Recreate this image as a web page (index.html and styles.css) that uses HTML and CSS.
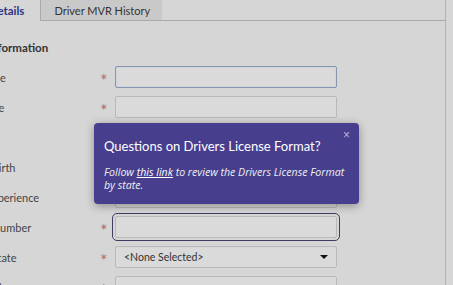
FILE: index.html
```html
<!DOCTYPE html>
<html lang="en">
<head>
    <meta charset="UTF-8">
    <title>Driver Details</title>
    <link rel="stylesheet" href="styles.css">
</head>
<body>
    <div class="page">
        <div class="tabs">
            <div class="tab active">Driver Details</div>
            <div class="tab">Driver MVR History</div>
            <div class="tab-fill"></div>
        </div>
        <div class="panel">
            <h3 class="section-title">Driver Information</h3>
            <div class="form">
                <label class="lbl">First Name</label><span class="req">*</span><input class="field field-blue" type="text">
                <label class="lbl">Last Name</label><span class="req">*</span><input class="field" type="text">
                <label class="lbl"></label><span class="req"></span><input class="field" type="text">
                <label class="lbl">Date of Birth</label><span class="req"></span><input class="field" type="text">
                <label class="lbl">Driver Experience</label><span class="req"></span><input class="field" type="text">
                <label class="lbl">License Number</label><span class="req">*</span><input class="field field-focus" type="text">
                <label class="lbl">License State</label><span class="req">*</span>
                <div class="field select"><span>&lt;None Selected&gt;</span><span class="caret"></span></div>
                <label class="lbl">License Class</label><span class="req">*</span><input class="field" type="text">
            </div>
        </div>
    </div>

    <div class="popover">
        <button class="popover-close">&times;</button>
        <h4>Questions on Drivers License Format?</h4>
        <p>Follow <a href="#">this link</a> to review the Drivers License Format by state.</p>
    </div>
</body>
</html>
```

FILE: styles.css
```css
body { margin: 0; background: #d6d6d6; font-family: 'Lato', 'Open Sans', sans-serif; color: #3a3a3a; overflow: hidden; height: 285px; }
.page { margin-left: -47px; width: 496px; }

/* Tabs */
.tabs { display: flex; height: 21px; }
.tab { font-size: 11px; line-height: 15px; padding: 3px 13px 3px 13px; box-sizing: border-box; height: 21px; white-space: nowrap; }
.tab.active { color: #2c3585; font-weight: bold; font-size: 11.5px; padding-left: 1px; padding-right: 16px; border-right: 1px solid #a9a9a9; }
.tab:not(.active) { background: #c9c9c9; color: #333; border-bottom: 1px solid #a9a9a9; width: 121px; }
.tab-fill { flex: 1; border-bottom: 1px solid #a9a9a9; border-right: 1px solid #b3b3b3; margin-right: 3px; }

/* Panel */
.panel { border-right: 1px solid #b3b3b3; margin-right: 3px; height: 264px; overflow: hidden; }
.section-title { margin: 0; padding-top: 20px; font-size: 11.5px; line-height: 14px; font-weight: bold; color: #333; }
.form { display: grid; grid-template-columns: 147px 15px 222px; grid-auto-rows: 22px; row-gap: 8px; margin-top: 11px; align-items: center; }
.lbl { font-size: 11px; color: #444; white-space: nowrap; overflow: hidden; }
.req { color: #b96a5c; font-size: 18px; line-height: 14px; text-align: left; margin-top: 5px; }
.field { height: 22px; box-sizing: border-box; border: 1px solid #b9b9b9; border-radius: 2px; background: #dadada; font-family: inherit; font-size: 11px; margin: 0; }
.field-blue { border-color: #8796ad; box-shadow: inset 0 0 0 1px #cfd6df; }
.field-focus { outline: 1px solid #3d3d62; outline-offset: 2px; }
.select { display: flex; align-items: center; justify-content: space-between; padding: 0 8px 0 8px; color: #333; font-size: 10.5px; }
.caret { width: 0; height: 0; border-left: 4px solid transparent; border-right: 4px solid transparent; border-top: 4px solid #111; }

/* Popover */
.popover { position: absolute; left: 94px; top: 123px; width: 265px; height: 81px; box-sizing: border-box; background: #473e8d; border-radius: 4px; box-shadow: 0 2px 10px rgba(0, 0, 0, 0.35); color: #fff; padding: 14px 4px 0 10px; }
.popover h4 { margin: 0; font-size: 13px; font-weight: normal; line-height: 18px; white-space: nowrap; }
.popover p { margin: 11px 0 0 0; font-family: 'Open Sans', sans-serif; font-size: 10.6px; font-style: italic; line-height: 13px; color: #eee; }
.popover a { color: #fff; }
.popover-close { position: absolute; right: 9px; top: 5px; background: none; border: none; color: #b9b5d8; font-size: 12px; padding: 0; cursor: pointer; }
```
